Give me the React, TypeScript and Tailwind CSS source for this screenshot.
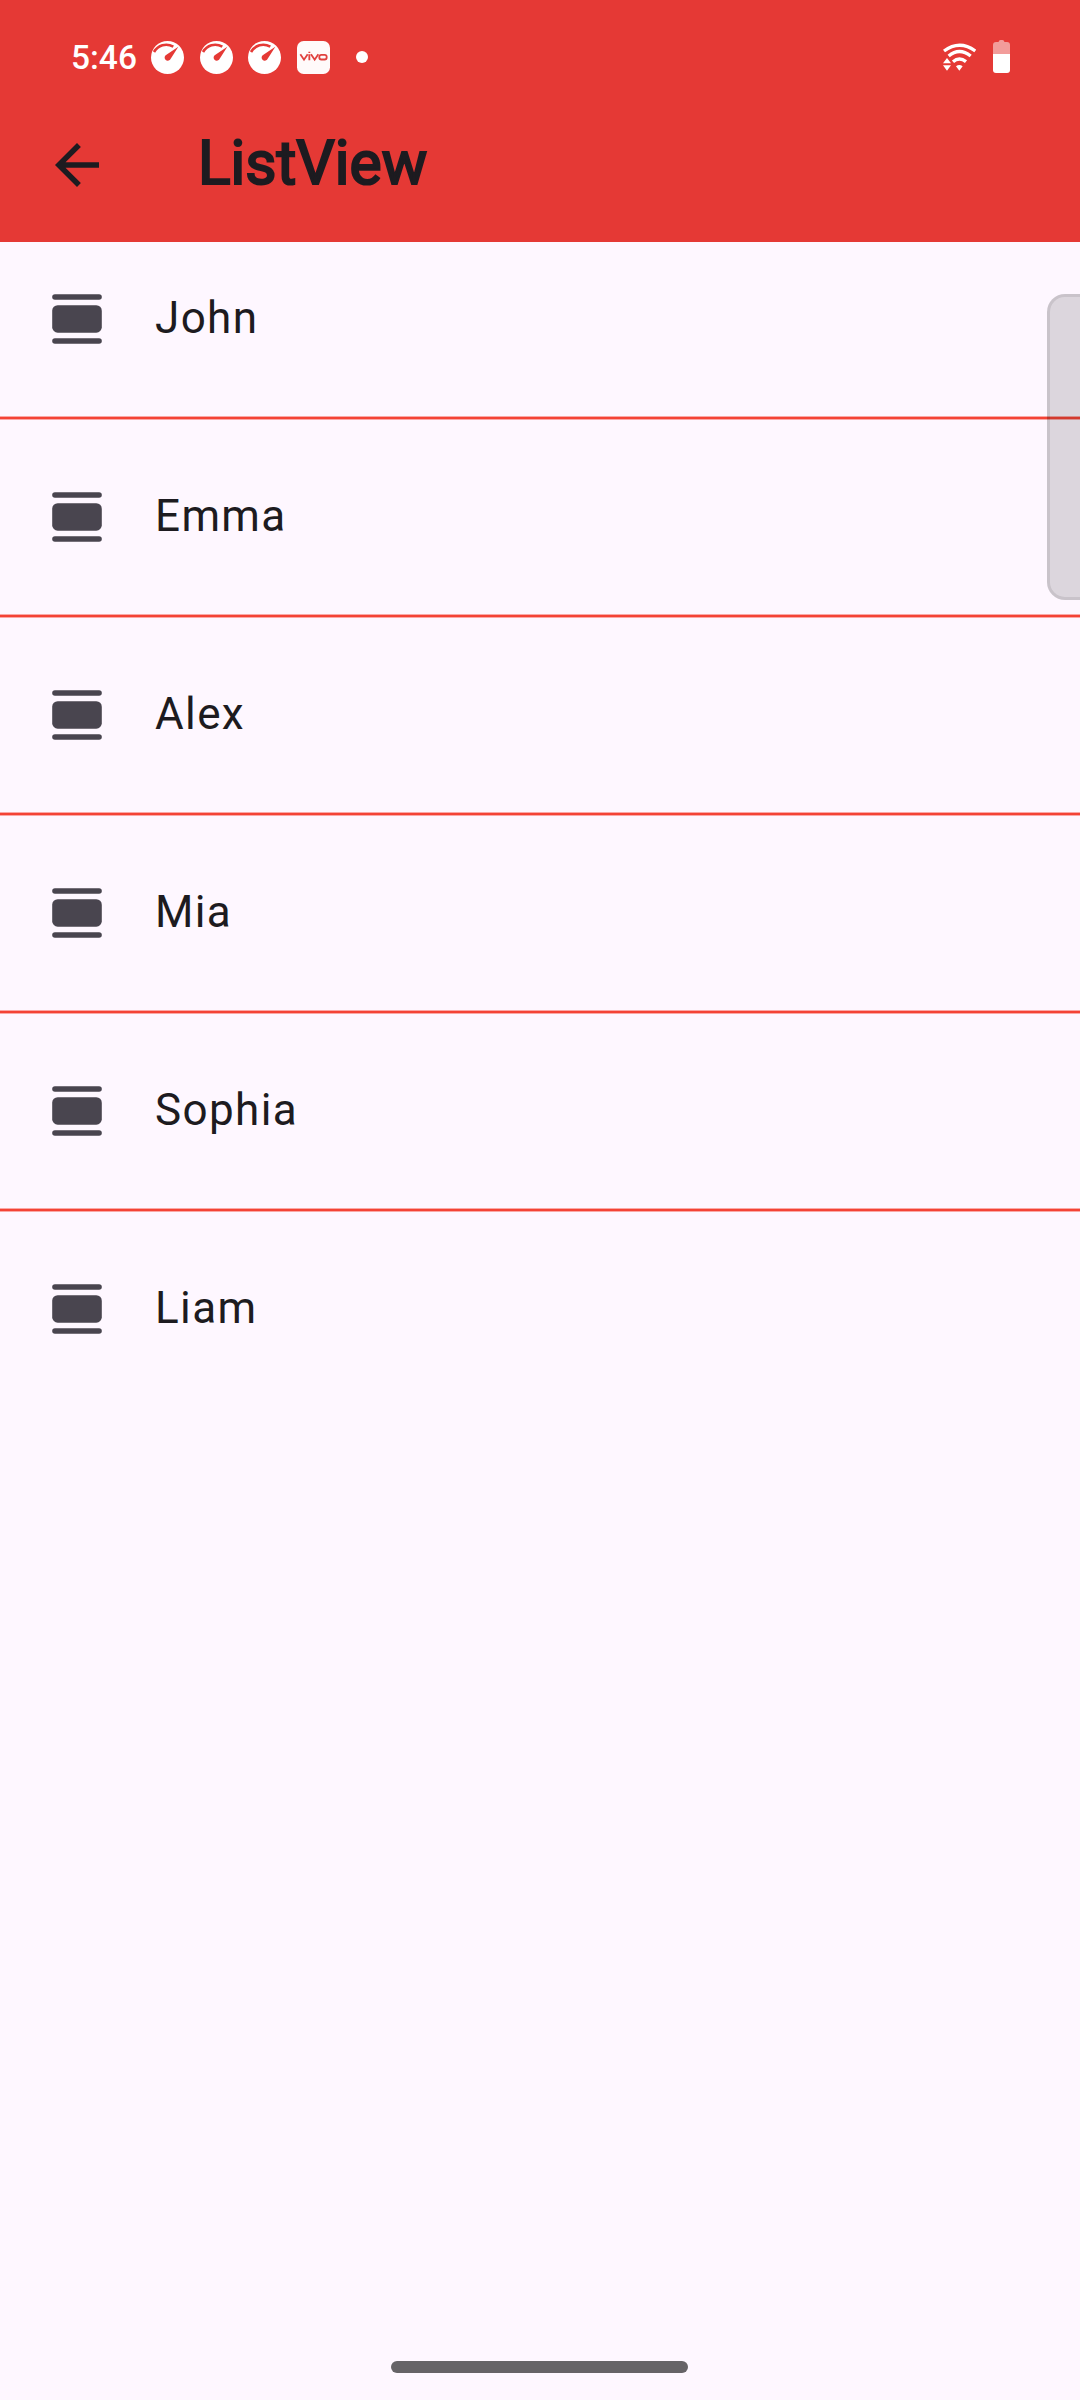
const names = ['John', 'Emma', 'Alex', 'Mia', 'Sophia', 'Liam'];

function GaugeIcon() {
  return (
    <svg viewBox="0 0 99 99" className="block size-[33px] shrink-0">
      <circle cx="49.500" cy="49.500" r="49.500" fill="#fff" />
      <path d="M9 33C21 13 45 5 67 17" fill="none" stroke="#e53935" strokeWidth="8" />
      <path d="M82 17L44 43C38 48 41 60 51 59C57 58 58 54 61 50Z" fill="#e53935" />
    </svg>
  );
}

function VivoIcon() {
  return (
    <svg viewBox="0 0 99 99" className="block size-[33px] shrink-0">
      <rect width="99" height="99" rx="20" fill="#fffafa" />
      <g fill="none" stroke="#e0423f" strokeWidth="5.500">
        <path d="M10 40L21 56L32 40M37 40V58M42 40L53 56L64 40M37 32V36" />
        <rect x="67" y="41.500" width="22" height="14" rx="6" />
      </g>
    </svg>
  );
}

function WifiIcon() {
  return (
    <svg viewBox="0 0 100 84" className="block h-[28px] w-[33.333px]">
      <g fill="none" stroke="#fff" strokeWidth="10">
        <path d="M3 24Q50 -11 97 24" />
        <path d="M17 39Q49 12 83 39" />
        <path d="M30 56Q49 40 69 56" />
      </g>
      <path d="M39 70Q49 62 59 70L49 83ZM0 61L12 45L24 61ZM0 67H24L12 83Z" fill="#fff" />
    </svg>
  );
}

function BatteryIcon() {
  return (
    <svg viewBox="0 0 17 33" className="block h-[33px] w-[17px]">
      <path d="M0 14V5Q0 2 3 2H5.500Q6 0 7.500 0H9.500Q11 0 11.500 2H14Q17 2 17 5V14Z" fill="#fff" fillOpacity=".5" />
      <path d="M0 14H17V30Q17 33 14 33H3Q0 33 0 30Z" fill="#fff" />
    </svg>
  );
}

function ListIcon() {
  return (
    <svg viewBox="0 0 50 50" className="block size-[50px] shrink-0" fill="#49454f">
      <rect x=".2" y=".2" width="49.600" height="5.600" rx="2.750" />
      <rect x=".2" y="11.200" width="49.600" height="27.500" rx="5.500" />
      <rect x=".2" y="44.200" width="49.600" height="5.600" rx="2.750" />
    </svg>
  );
}

export default function App() {
  return (
    <div className="relative flex h-[2400px] w-[1080px] flex-col overflow-hidden bg-[#fef7ff] font-[Roboto,sans-serif] text-[#1d1b20]">
      <header className="h-[242px] shrink-0 bg-[#e53935]">
        <div className="flex h-[88px] items-center pt-[27px] pr-[70px] pl-[71px]">
          <span className="w-[80px] pb-px text-[33.5px] leading-[33px] font-medium text-white">5:46</span>
          <div className="flex items-center gap-[15.600px]">
            <GaugeIcon />
            <GaugeIcon />
            <GaugeIcon />
            <VivoIcon />
          </div>
          <span className="mb-px ml-[26px] size-[12px] rounded-full bg-white" />
          <div className="ml-auto flex items-center gap-[17px] pb-[2px]">
            <WifiIcon />
            <BatteryIcon />
          </div>
        </div>
        <div className="flex h-[154px] items-center pl-[44px]">
          <svg viewBox="0 0 24 24" className="size-[66px] shrink-0" fill="#1d1b20">
            <path d="M20 11H7.830l5.590-5.590L12 4l-8 8 8 8 1.410-1.410L7.830 13H20z" />
          </svg>
          <h1 className="ml-[88px] pb-[2px] text-[60.5px] leading-[80px] font-normal [-webkit-text-stroke:2.200px_#1d1b20]">ListView</h1>
        </div>
      </header>
      <ul className="flex flex-col">
        {names.map((name, i) => (
          <li key={name}>
            {i > 0 && (
              <div className="flex h-[44px] items-center">
                <div className="h-[4px] w-full border-y border-[#faa8a6] bg-[#f44336]" />
              </div>
            )}
            <div className="flex h-[154px] items-center pl-[52px]">
              <ListIcon />
              <span className="ml-[53px] pb-[2px] text-[44px] leading-[66px] tracking-[1.375px]">{name}</span>
            </div>
          </li>
        ))}
      </ul>
      <div className="absolute top-[294px] right-0 h-[306px] w-[33px] rounded-l-[18px] border-[3px] border-r-0 border-black/[0.09] bg-black/[0.135]" />
      <div className="mt-auto mb-[27px] ml-[391px] h-[12px] w-[297px] rounded-full bg-[#666367]" />
    </div>
  );
}
